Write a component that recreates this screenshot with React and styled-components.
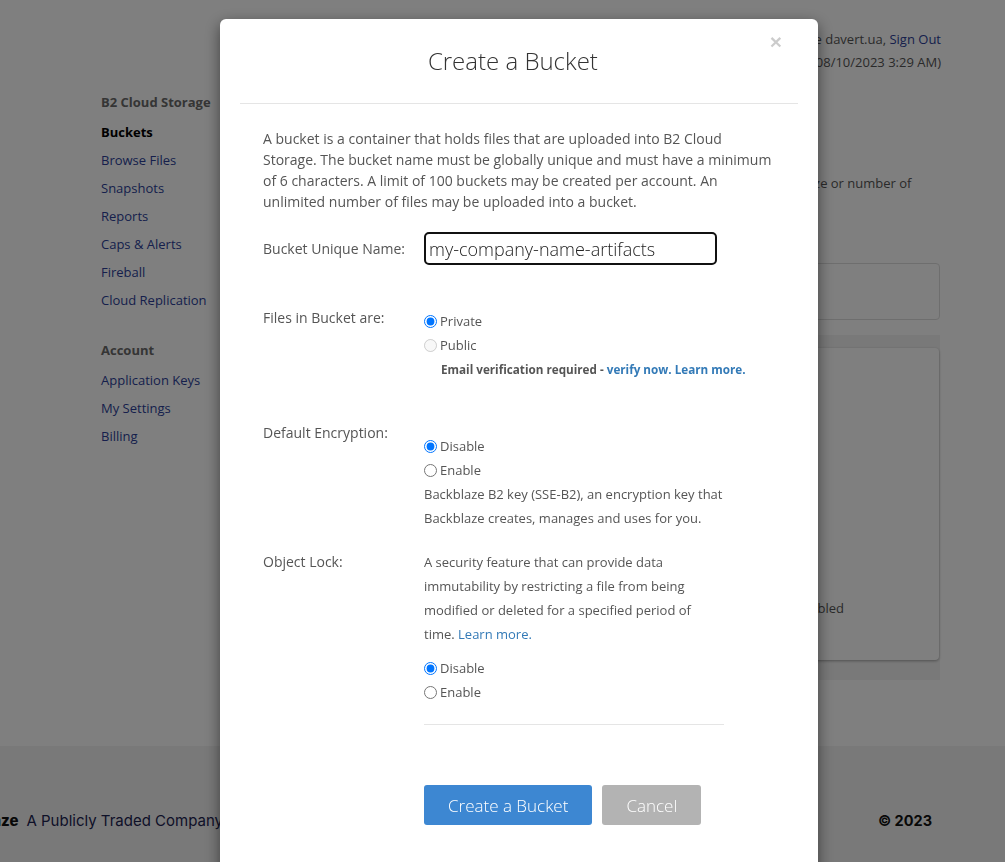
import React from "react";
import styled, { createGlobalStyle } from "styled-components";

const Global = createGlobalStyle`
  html, body { margin: 0; padding: 0; }
  body {
    font-family: "Open Sans", "Noto Sans", sans-serif;
    background: #fff;
    color: #555;
    overflow: hidden;
  }
  * { box-sizing: border-box; }
`;

const Page = styled.div`
  min-height: 100vh;
  display: flex;
  flex-direction: column;
`;

const TopBar = styled.div`
  padding: 28px 64px 0 0;
  text-align: right;
  font-size: 13px;
  line-height: 23px;
  color: #555;
  height: 92px;
`;

const Link = styled.a`
  color: ${(p) => p.$color || "#2c3f98"};
  text-decoration: none;
`;

const Main = styled.div`
  display: flex;
  padding: 0 65px 0 101px;
  margin-bottom: 66px;
`;

const Sidebar = styled.nav`
  width: 170px;
  flex-shrink: 0;
  font-size: 13px;
`;

const NavHeading = styled.div`
  font-weight: 700;
  color: #6a6a6a;
  line-height: 20px;
  margin: ${(p) => (p.$first ? "0" : "26px")} 0 6px;
`;

const NavItem = styled.div`
  line-height: 28px;
  color: ${(p) => (p.$active ? "#000" : "#2c3f98")};
  font-weight: ${(p) => (p.$active ? 700 : 400)};
`;

const Content = styled.section`
  flex: 1;
  min-width: 0;
`;

const PageTitle = styled.h1`
  margin: 0 0 40px;
  font-size: 28px;
  font-weight: 300;
  line-height: 40px;
  color: #333;
`;

const Lead = styled.p`
  margin: 0 0 47px;
  font-size: 13px;
  line-height: 22px;
  color: #555;
  white-space: nowrap;
  padding-left: 3px;
`;

const FilterBox = styled.div`
  height: 57px;
  border: 1px solid #ddd;
  border-radius: 4px;
  margin-bottom: 15px;
`;

const CardWell = styled.div`
  background: #f3f3f3;
  padding: 13px 1px 20px 0;
`;

const Card = styled.div`
  height: 312px;
  background: #fff;
  border-radius: 4px;
  box-shadow: 0 1px 3px rgba(0, 0, 0, 0.35);
  display: flex;
  flex-direction: column;
  justify-content: flex-end;
  padding: 0 95px 42px 20px;
`;

const CardRow = styled.div`
  display: flex;
  justify-content: flex-end;
  gap: 10px;
  font-size: 13px;
  line-height: 20px;
  color: #555;
`;

const Footer = styled.footer`
  flex: 1;
  background: #f3f3f3;
  padding: 65px 73px 60px 0;
  display: flex;
  justify-content: space-between;
  align-items: center;
  font-family: Inter, "Liberation Sans", sans-serif;
  font-size: 15px;
  line-height: 20px;
  color: #1c2351;
`;

const Brand = styled.div`
  width: 223px;
  overflow: hidden;
  display: flex;
  justify-content: flex-end;
  white-space: nowrap;
  gap: 8px;
`;

const BrandName = styled.span`
  font-weight: 800;
  color: #111;
`;

const Copyright = styled.span`
  font-size: 14.5px;
  font-weight: 700;
  color: #111;
`;

/* ---------- Modal ---------- */

const Overlay = styled.div`
  position: fixed;
  inset: 0;
  background: rgba(0, 0, 0, 0.5);
  overflow: hidden;
  padding: 19px 0 0 220px;
`;

const Modal = styled.div`
  width: 598px;
  min-height: 900px;
  background: #fff;
  border-radius: 6px;
  box-shadow: 0 5px 15px rgba(0, 0, 0, 0.5);
`;

const ModalHeader = styled.div`
  margin: 0 20px;
  padding: 0 16px 29px;
  border-bottom: 1px solid #e5e5e5;
  display: flex;
  align-items: flex-start;
`;

const ModalTitle = styled.h4`
  flex: 1;
  margin: 29px 0 0;
  text-align: center;
  font-size: 24px;
  font-weight: 300;
  line-height: 26px;
  color: #333;
`;

const CloseButton = styled.button`
  margin-top: 12px;
  padding: 0;
  border: 0;
  background: transparent;
  font-family: "Liberation Sans", Arial, sans-serif;
  font-size: 21px;
  font-weight: 700;
  line-height: 21px;
  color: #000;
  opacity: 0.2;
  cursor: pointer;
`;

const ModalBody = styled.div`
  padding: 24px 43px 0;
`;

const Intro = styled.p`
  margin: 0 0 20px;
  font-size: 14px;
  line-height: 21px;
  color: #555;
`;

const FieldRow = styled.div`
  display: flex;
  align-items: ${(p) => (p.$center ? "center" : "flex-start")};
  margin-bottom: ${(p) => p.$mb || 0}px;
`;

const FieldLabel = styled.label`
  width: 161px;
  flex-shrink: 0;
  font-size: 14px;
  line-height: 20px;
  color: #555;
  padding-top: ${(p) => p.$pt || 0}px;
`;

const NameInput = styled.input`
  width: 293px;
  height: 33px;
  border: 2px solid #111;
  border-radius: 5px;
  padding: 0 3px;
  font-family: "Open Sans", sans-serif;
  font-size: 18px;
  font-weight: 300;
  color: #222;
  outline: none;
`;

const Column = styled.div`
  width: 300px;
  padding-top: ${(p) => p.$pt || 0}px;
`;

const RadioLine = styled.label`
  display: flex;
  align-items: center;
  height: 24px;
  font-size: 13px;
  color: #555;
`;

const Radio = styled.input`
  width: 13px;
  height: 13px;
  margin: 0 3px 0 0;
`;

const Notice = styled.div`
  padding-left: 17px;
  font-size: 11.7px;
  line-height: 24px;
  font-weight: 700;
  color: #555;
  white-space: nowrap;
`;

const Help = styled.p`
  margin: 0 0 ${(p) => p.$mb || 0}px;
  font-size: 13px;
  line-height: 24px;
  color: #555;
`;

const Divider = styled.hr`
  width: 300px;
  margin: 20px 0 0;
  border: 0;
  border-top: 1px solid #e5e5e5;
`;

const Actions = styled.div`
  display: flex;
  gap: 10px;
  padding-left: 161px;
  margin-top: 60px;
`;

const Button = styled.button`
  height: 40px;
  padding: 0 24px;
  border: 0;
  border-radius: 3px;
  background: ${(p) => (p.$primary ? "#3d87d2" : "#b3b3b3")};
  color: #fff;
  font-family: "Open Sans", sans-serif;
  font-size: 17px;
  font-weight: 300;
  cursor: pointer;
`;

const blue = "#337ab7";

function RadioOption({ name, label, checked, disabled }) {
  return (
    <RadioLine>
      <Radio type="radio" name={name} defaultChecked={checked} disabled={disabled} />
      {label}
    </RadioLine>
  );
}

export default function App() {
  return (
    <>
      <Global />
      <Page>
        <TopBar>
          <div>
            Signed in as the davert.ua, <Link>Sign Out</Link>
          </div>
          <div>Last signed in (08/10/2023 3:29 AM)</div>
        </TopBar>
        <Main>
          <Sidebar>
            <NavHeading $first>B2 Cloud Storage</NavHeading>
            <NavItem $active>Buckets</NavItem>
            <NavItem>Browse Files</NavItem>
            <NavItem>Snapshots</NavItem>
            <NavItem>Reports</NavItem>
            <NavItem>Caps &amp; Alerts</NavItem>
            <NavItem>Fireball</NavItem>
            <NavItem>Cloud Replication</NavItem>
            <NavHeading>Account</NavHeading>
            <NavItem>Application Keys</NavItem>
            <NavItem>My Settings</NavItem>
            <NavItem>Billing</NavItem>
          </Sidebar>
          <Content>
            <PageTitle>B2 Cloud Storage Buckets</PageTitle>
            <Lead>
              Buckets hold your files. You can also create up to 100 buckets, with no limit on the total size or number of
              <br />
              files in each bucket.
            </Lead>
            <FilterBox />
            <CardWell>
              <Card>
                <CardRow>
                  <span>Object Lock:</span>
                  <span>Disabled</span>
                </CardRow>
              </Card>
            </CardWell>
          </Content>
        </Main>
        <Footer>
          <Brand>
            <BrandName>Backblaze</BrandName>
            <span>A Publicly Traded Company</span>
          </Brand>
          <Copyright>© 2023</Copyright>
        </Footer>
      </Page>

      <Overlay>
        <Modal>
          <ModalHeader>
            <ModalTitle>Create a Bucket</ModalTitle>
            <CloseButton aria-label="Close">×</CloseButton>
          </ModalHeader>
          <ModalBody>
            <Intro>
              A bucket is a container that holds files that are uploaded into B2 Cloud Storage. The bucket
              name must be globally unique and must have a minimum of 6 characters. A limit of 100 buckets
              may be created per account. An unlimited number of files may be uploaded into a bucket.
            </Intro>

            <FieldRow $center $mb={43}>
              <FieldLabel>Bucket Unique Name:</FieldLabel>
              <NameInput defaultValue="my-company-name-artifacts" />
            </FieldRow>

            <FieldRow $mb={42}>
              <FieldLabel>Files in Bucket are:</FieldLabel>
              <Column $pt={1}>
                <RadioOption name="privacy" label="Private" checked />
                <RadioOption name="privacy" label="Public" disabled />
                <Notice>
                  Email verification required - <Link $color={blue}>verify now.</Link>{" "}
                  <Link $color={blue}>Learn more.</Link>
                </Notice>
              </Column>
            </FieldRow>

            <FieldRow $mb={20}>
              <FieldLabel>Default Encryption:</FieldLabel>
              <Column $pt={11}>
                <RadioOption name="enc" label="Disable" checked />
                <RadioOption name="enc" label="Enable" />
                <Help>
                  Backblaze B2 key (SSE-B2), an encryption key that Backblaze creates, manages and uses for you.
                </Help>
              </Column>
            </FieldRow>

            <FieldRow>
              <FieldLabel $pt={2}>Object Lock:</FieldLabel>
              <div>
                <Column>
                  <Help $mb={10}>
                    A security feature that can provide data immutability by restricting a file from being
                    modified or deleted for a specified period of time. <Link $color={blue}>Learn more.</Link>
                  </Help>
                  <RadioOption name="lock" label="Disable" checked />
                  <RadioOption name="lock" label="Enable" />
                </Column>
                <Divider />
              </div>
            </FieldRow>

            <Actions>
              <Button $primary>Create a Bucket</Button>
              <Button>Cancel</Button>
            </Actions>
          </ModalBody>
        </Modal>
      </Overlay>
    </>
  );
}
